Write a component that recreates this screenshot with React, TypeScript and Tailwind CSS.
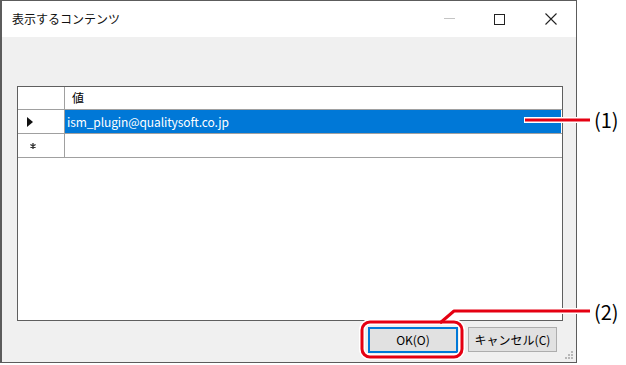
import React from 'react';

/**
 * 表示するコンテンツ — WinForms 風ダイアログ + 注記 (1)(2)
 */
const FONT = { fontFamily: '"Noto Sans CJK JP", "Noto Sans", sans-serif' };

function TitleButtons() {
  return (
    <div className="flex h-full">
      <div className="w-[46px] h-full flex items-center justify-center">
        <svg width="11" height="2"><rect x="0" y="0" width="11" height="1" fill="#c4c4c4" /></svg>
      </div>
      <div className="w-[54px] h-full flex items-center justify-center">
        <svg width="11" height="11"><rect x="0.5" y="0.5" width="10" height="10" fill="none" stroke="#222" /></svg>
      </div>
      <div className="w-[50px] h-full flex items-center justify-center">
        <svg width="12" height="12"><path d="M0.5 0.5 L11.5 11.5 M11.5 0.5 L0.5 11.5" stroke="#222" strokeWidth="1.1" /></svg>
      </div>
    </div>
  );
}

function Grid() {
  return (
    <div className="ml-[15px] w-[546px] h-[235px] bg-white border border-[#5f5f5f] text-[12px] text-black">
      {/* header */}
      <div className="flex h-[23px] border-b border-[#a0a0a0]">
        <div className="w-[47px] border-r border-[#a0a0a0]" />
        <div className="flex-1 pl-[7px] flex items-center">値</div>
      </div>
      {/* row 1 — 選択行 */}
      <div className="flex h-[24px] border-b border-[#a0a0a0]">
        <div className="w-[47px] border-r border-[#a0a0a0] flex items-center pl-[9px]">
          <svg width="6" height="10"><path d="M0 0 L6 5 L0 10 Z" fill="#111" /></svg>
        </div>
        <div className="flex-1 mr-[1px] bg-[#0078d7] text-white pl-[2px] flex items-center tracking-[-0.1px]">ism_plugin@qualitysoft.co.jp</div>
      </div>
      {/* row 2 — 新規行 */}
      <div className="flex h-[24px] border-b border-[#a0a0a0]">
        <div className="w-[47px] border-r border-[#a0a0a0] flex items-center pl-[12px]">
          <svg width="6" height="6">
            <path d="M3 0 V6 M0.4 1.5 L5.6 4.5 M5.6 1.5 L0.4 4.5" stroke="#333" strokeWidth="1.3" />
          </svg>
        </div>
        <div className="flex-1" />
      </div>
    </div>
  );
}

export default function App() {
  return (
    <div className="relative w-[626px] h-[365px] bg-white overflow-hidden" style={FONT}>
      {/* window */}
      <div className="w-[577px] h-[363px] flex flex-col border border-[#5c5c5c] border-l-2">
        <div className="h-[36px] bg-white flex items-center justify-between">
          <span className="pl-[10px] text-[12px] text-[#111]">表示するコンテンツ</span>
          <TitleButtons />
        </div>
        <div className="flex-1 bg-[#f0f0f0] pt-[49px] relative">
          <Grid />
          <div className="flex justify-end gap-[10px] pr-[19px] mt-[6px]">
            <button className="w-[90px] h-[26px] bg-[#e1e1e1] border-2 border-[#0078d7] text-[12px] text-black">OK(O)</button>
            <button className="w-[89px] h-[25px] bg-[#e1e1e1] border border-[#adadad] text-[12px] text-black">キャンセル(C)</button>
          </div>
          {/* resize grip */}
          <svg className="absolute right-[3px] bottom-[3px]" width="10" height="10">
            {[[8, 2], [5, 5], [8, 5], [2, 8], [5, 8], [8, 8]].map(([x, y], i) => (
              <rect key={i} x={x} y={y} width="2" height="2" fill="#b8b8b8" />
            ))}
          </svg>
        </div>
      </div>

      {/* 注記線 */}
      <svg className="absolute left-0 top-0 pointer-events-none" width="626" height="365">
        <g stroke="#fff" strokeWidth="6" fill="none" strokeLinejoin="round">
          <path d="M524 120 H590" />
          <path d="M440 323 L454 311 H590" />
          <rect x="362" y="322" width="100" height="35" rx="8" />
        </g>
        <g stroke="#e50012" strokeWidth="3" fill="none" strokeLinejoin="round">
          <path d="M525 120 H590" />
          <path d="M440 323 L454 311 H590" />
          <rect x="362" y="322" width="100" height="35" rx="8" />
        </g>
      </svg>
      <span className="absolute left-[594px] top-[106px] text-[20px] leading-[28px] text-black">(1)</span>
      <span className="absolute left-[594px] top-[298px] text-[20px] leading-[28px] text-black">(2)</span>
    </div>
  );
}
